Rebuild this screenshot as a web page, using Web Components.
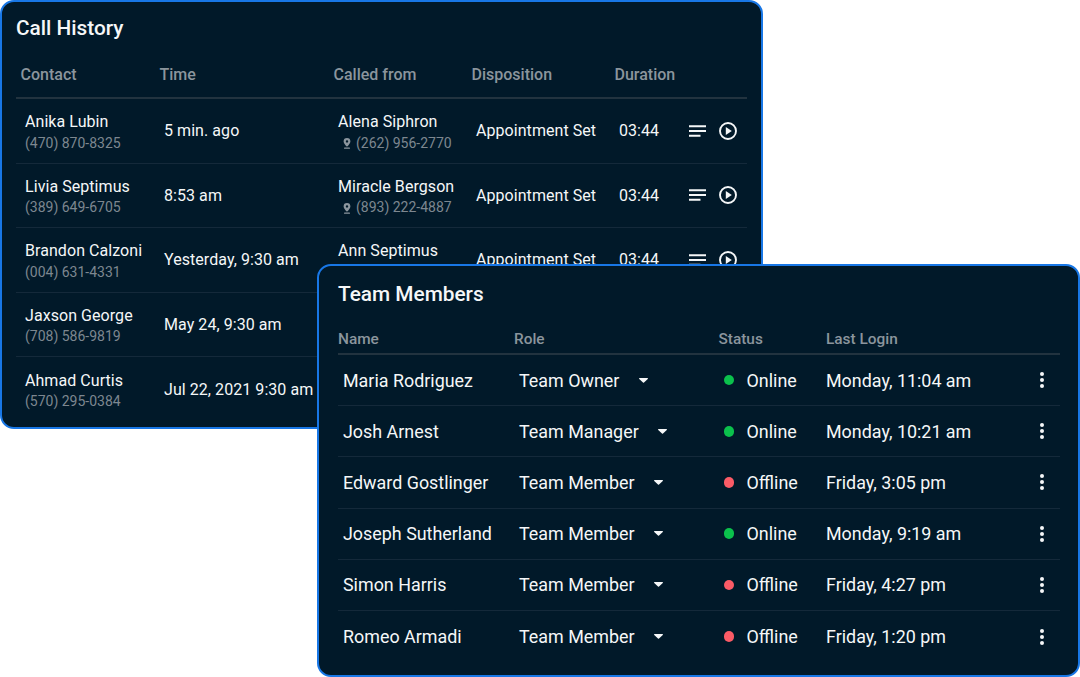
<!DOCTYPE html>
<html lang="en">
<head>
<meta charset="utf-8">
<title>Call History and Team Members</title>
<style>
  html, body { margin: 0; background: #fff; }
  body { width: 1080px; height: 677px; position: relative; overflow: hidden; font-family: Roboto, sans-serif; }
  call-history { position: absolute; left: 0; top: 0; }
  team-members { position: absolute; left: 317px; top: 264px; }
</style>
</head>
<body>
<call-history>
  <call-row name="Anika Lubin" phone="(470) 870-8325" time="5 min. ago" from="Alena Siphron" from-phone="(262) 956-2770" disposition="Appointment Set" duration="03:44"></call-row>
  <call-row name="Livia Septimus" phone="(389) 649-6705" time="8:53 am" from="Miracle Bergson" from-phone="(893) 222-4887" disposition="Appointment Set" duration="03:44"></call-row>
  <call-row name="Brandon Calzoni" phone="(004) 631-4331" time="Yesterday, 9:30 am" from="Ann Septimus" disposition="Appointment Set" duration="03:44"></call-row>
  <call-row name="Jaxson George" phone="(708) 586-9819" time="May 24, 9:30 am"></call-row>
  <call-row name="Ahmad Curtis" phone="(570) 295-0384" time="Jul 22, 2021 9:30 am"></call-row>
</call-history>
<team-members>
  <team-row name="Maria Rodriguez" role="Team Owner" status="Online" login="Monday, 11:04 am"></team-row>
  <team-row name="Josh Arnest" role="Team Manager" status="Online" login="Monday, 10:21 am"></team-row>
  <team-row name="Edward Gostlinger" role="Team Member" status="Offline" login="Friday, 3:05 pm"></team-row>
  <team-row name="Joseph Sutherland" role="Team Member" status="Online" login="Monday, 9:19 am"></team-row>
  <team-row name="Simon Harris" role="Team Member" status="Offline" login="Friday, 4:27 pm"></team-row>
  <team-row name="Romeo Armadi" role="Team Member" status="Offline" login="Friday, 1:20 pm"></team-row>
</team-members>

<script>
const callColumns = '139px 174px 138px 143px 1fr';
const teamColumns = '176px 204.5px 107.5px 1fr';

const callTemplate = document.createElement('template');
callTemplate.innerHTML = `
  <style>
    :host {
      display: block;
      box-sizing: border-box;
      width: 763px;
      height: 429px;
      padding: 0 14px;
      background: #011929;
      border: 2px solid #1877e6;
      border-radius: 14px;
      overflow: hidden;
      color: #f5f7f8;
      font-family: Roboto, sans-serif;
    }
    h2 { margin: 0; padding-top: 12px; height: 46px; box-sizing: border-box; font-size: 20.8px; line-height: 28px; font-weight: 500; }
    .head {
      display: grid;
      grid-template-columns: ${callColumns};
      height: 51px;
      padding-top: 4px;
      box-sizing: border-box;
      align-items: center;
      border-bottom: 2px solid #22333f;
      color: #8b959d;
      font-size: 16px;
      font-weight: 500;
    }
    .head span { padding-left: 4.5px; }
  </style>
  <h2>Call History</h2>
  <div class="head">
    <span>Contact</span><span>Time</span><span>Called from</span><span>Disposition</span><span>Duration</span>
  </div>
  <slot></slot>
`;

class CallHistory extends HTMLElement {
  constructor() {
    super();
    this.attachShadow({ mode: 'open' }).appendChild(callTemplate.content.cloneNode(true));
  }
}
customElements.define('call-history', CallHistory);

const callRowTemplate = document.createElement('template');
callRowTemplate.innerHTML = `
  <style>
    :host {
      display: grid;
      grid-template-columns: ${callColumns};
      align-items: center;
      height: 64.5px;
      box-sizing: border-box;
      border-bottom: 1px solid #14293a;
      font-size: 16px;
      line-height: 21.5px;
      letter-spacing: .06px;
    }
    :host(:last-child) { border-bottom: 0; }
    .cell { padding-left: 9px; white-space: nowrap; }
    .sub { display: flex; align-items: center; min-height: 21.5px; color: #7d8790; font-size: 14px; letter-spacing: 0; }
    .pin { width: 8px; height: 11px; margin: 1px 5px 0 5px; }
    .duration { display: flex; align-items: center; }
    .duration span { width: 70px; }
    .lines { margin-right: 13px; }
    .person { margin-top: 3.5px; }
  </style>
  <div class="cell person"><div class="name"></div><div class="sub phone"></div></div>
  <div class="cell time"></div>
`;

const calledFrom = document.createElement('template');
calledFrom.innerHTML = `
  <div class="cell person">
    <div class="from"></div>
    <div class="sub from-sub"></div>
  </div>
`;

const pinIcon = `<svg class="pin" viewBox="0 0 8 11"><path fill="#8b959d" d="M4 0a3.4 3.4 0 0 0-3.4 3.4C.6 5.6 4 8.6 4 8.6s3.4-3 3.4-5.2A3.4 3.4 0 0 0 4 0zm0 4.6a1.2 1.2 0 1 1 0-2.4 1.2 1.2 0 0 1 0 2.4z"/><rect fill="#8b959d" x="1" y="9.6" width="6" height="1.2" rx=".6"/></svg>`;

const rowEnd = document.createElement('template');
rowEnd.innerHTML = `
  <div class="cell disposition"></div>
  <div class="cell duration">
    <span></span>
    <svg class="lines" width="17" height="12" viewBox="0 0 17 12"><path stroke="#f5f7f8" stroke-width="1.9" d="M0 1.2h17M0 6h17M0 10.8h11.5"/></svg>
    <svg width="18" height="18" viewBox="0 0 18 18"><circle cx="9" cy="9" r="8" fill="none" stroke="#f5f7f8" stroke-width="1.9"/><path fill="#f5f7f8" d="M6.8 5 12.8 9 6.8 13z"/></svg>
  </div>
`;

class CallRow extends HTMLElement {
  constructor() {
    super();
    const root = this.attachShadow({ mode: 'open' });
    root.appendChild(callRowTemplate.content.cloneNode(true));
    root.querySelector('.name').textContent = this.getAttribute('name');
    root.querySelector('.phone').textContent = this.getAttribute('phone');
    root.querySelector('.time').textContent = this.getAttribute('time');
    // the lower rows sit behind the other panel, only fill in what is given
    if (this.hasAttribute('from')) {
      root.appendChild(calledFrom.content.cloneNode(true));
      root.querySelector('.from').textContent = this.getAttribute('from');
      if (this.hasAttribute('from-phone')) {
        const sub = root.querySelector('.from-sub');
        sub.innerHTML = pinIcon + '<span></span>';
        sub.lastChild.textContent = this.getAttribute('from-phone');
      }
    }
    if (this.hasAttribute('disposition')) {
      root.appendChild(rowEnd.content.cloneNode(true));
      root.querySelector('.disposition').textContent = this.getAttribute('disposition');
      root.querySelector('.duration span').textContent = this.getAttribute('duration');
    }
  }
}
customElements.define('call-row', CallRow);

const teamTemplate = document.createElement('template');
teamTemplate.innerHTML = `
  <style>
    :host {
      display: block;
      box-sizing: border-box;
      width: 763px;
      height: 413px;
      padding: 0 18px 0 19px;
      background: #011929;
      border: 2px solid #1877e6;
      border-radius: 14px;
      overflow: hidden;
      color: #f5f7f8;
      font-family: Roboto, sans-serif;
    }
    h2 { margin: 0; padding-top: 14px; height: 48px; box-sizing: border-box; font-size: 20.8px; line-height: 28px; font-weight: 500; }
    .head {
      display: grid;
      grid-template-columns: ${teamColumns};
      height: 41px;
      padding-top: 11px;
      box-sizing: border-box;
      align-items: center;
      border-bottom: 2px solid #22333f;
      color: #8b959d;
      font-size: 15.4px;
      font-weight: 500;
    }
  </style>
  <h2>Team Members</h2>
  <div class="head">
    <span>Name</span><span>Role</span><span>Status</span><span>Last Login</span>
  </div>
  <slot></slot>
`;

class TeamMembers extends HTMLElement {
  constructor() {
    super();
    this.attachShadow({ mode: 'open' }).appendChild(teamTemplate.content.cloneNode(true));
  }
}
customElements.define('team-members', TeamMembers);

const teamRowTemplate = document.createElement('template');
teamRowTemplate.innerHTML = `
  <style>
    :host {
      display: grid;
      grid-template-columns: ${teamColumns};
      align-items: center;
      height: 51.2px;
      box-sizing: border-box;
      border-bottom: 1px solid #14293a;
      font-size: 17.9px;
      white-space: nowrap;
    }
    :host(:last-child) { border-bottom: 0; }
    .name { padding-left: 5px; }
    .role { display: flex; align-items: center; gap: 19.4px; padding-left: 5px; }
    .status { display: flex; align-items: center; gap: 12.5px; padding-left: 5px; }
    .dot { width: 10.5px; height: 10.5px; border-radius: 50%; }
    .last { display: flex; align-items: center; justify-content: space-between; padding-right: 15.6px; }
    .caret { width: 9px; height: 5px; }
    .more { width: 4px; height: 16px; }
  </style>
  <div class="name"></div>
  <div class="role">
    <span class="role-text"></span>
    <svg class="caret" viewBox="0 0 9 5"><path fill="#f5f7f8" d="M.6 0h7.8c.5 0 .8.6.4 1L5 4.6c-.3.3-.7.3-1 0L.2 1C-.2.6.1 0 .6 0z"/></svg>
  </div>
  <div class="status"><span class="dot"></span><span class="status-text"></span></div>
  <div class="last">
    <span class="login"></span>
    <svg class="more" viewBox="0 0 4 16"><circle cx="2" cy="2" r="2" fill="#f5f7f8"/><circle cx="2" cy="8" r="2" fill="#f5f7f8"/><circle cx="2" cy="14" r="2" fill="#f5f7f8"/></svg>
  </div>
`;

class TeamRow extends HTMLElement {
  constructor() {
    super();
    const root = this.attachShadow({ mode: 'open' });
    root.appendChild(teamRowTemplate.content.cloneNode(true));
    const status = this.getAttribute('status');
    root.querySelector('.name').textContent = this.getAttribute('name');
    root.querySelector('.role-text').textContent = this.getAttribute('role');
    root.querySelector('.status-text').textContent = status;
    root.querySelector('.login').textContent = this.getAttribute('login');
    root.querySelector('.dot').style.background = status === 'Online' ? '#0bc14c' : '#fb5b66';
  }
}
customElements.define('team-row', TeamRow);
</script>
</body>
</html>
